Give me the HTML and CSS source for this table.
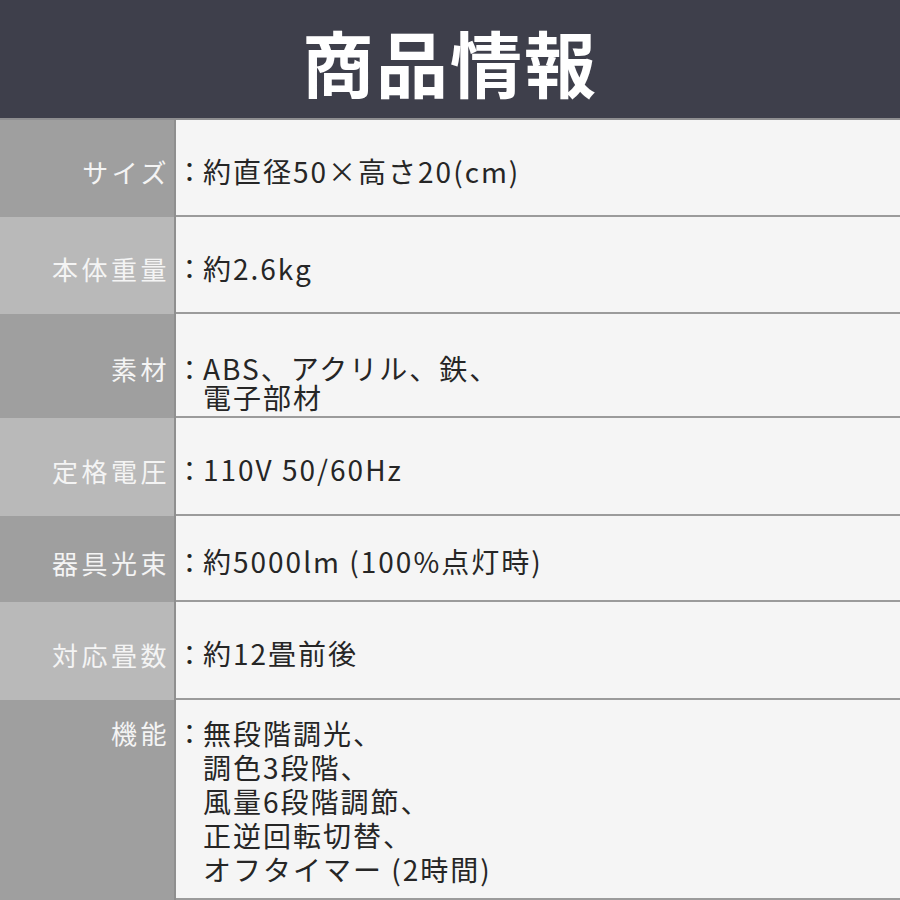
FILE: index.html
```html
<!DOCTYPE html>
<html lang="ja">
<head>
<meta charset="utf-8">
<link rel="stylesheet" href="styles.css">
</head>
<body>
<div class="page">
  <header class="head"><h1 class="title">商品情報</h1></header>
  <div class="table">
    <div class="row r1 dark">
      <div class="label">サイズ</div>
      <div class="value"><span class="colon">：</span><div class="text">約直径50×高さ20(cm)</div></div>
    </div>
    <div class="row r2 light">
      <div class="label">本体重量</div>
      <div class="value"><span class="colon">：</span><div class="text">約2.6kg</div></div>
    </div>
    <div class="row r3 dark top">
      <div class="label">素材</div>
      <div class="value"><span class="colon">：</span><div class="text tight">ABS、アクリル、鉄、<br>電子部材</div></div>
    </div>
    <div class="row r4 light">
      <div class="label">定格電圧</div>
      <div class="value"><span class="colon">：</span><div class="text">110V 50/60Hz</div></div>
    </div>
    <div class="row r5 dark">
      <div class="label">器具光束</div>
      <div class="value"><span class="colon">：</span><div class="text">約5000lm (100%点灯時)</div></div>
    </div>
    <div class="row r6 light">
      <div class="label">対応畳数</div>
      <div class="value"><span class="colon">：</span><div class="text">約12畳前後</div></div>
    </div>
    <div class="row r7 dark top">
      <div class="label">機能</div>
      <div class="value"><span class="colon">：</span><div class="text loose">無段階調光、<br>調色3段階、<br>風量6段階調節、<br>正逆回転切替、<br>オフタイマー (2時間)</div></div>
    </div>
  </div>
</div>
</body>
</html>
```
FILE: styles.css
```css
* { box-sizing: border-box; }
html, body { margin: 0; padding: 0; }
body {
  width: 900px;
  height: 900px;
  overflow: hidden;
  background: #f5f5f5;
  font-family: "Noto Sans CJK JP", "Noto Sans", sans-serif;
}
.head {
  height: 120px;
  background: #3e3f4b;
  border-bottom: 2px solid #8e8e90;
  display: flex;
  align-items: center;
  justify-content: center;
}
.title {
  margin: 0;
  padding-top: 4px;
  color: #ffffff;
  font-size: 72px;
  font-weight: 700;
  letter-spacing: 2px;
  line-height: 1;
}
.table { display: flex; flex-direction: column; }
.row { display: flex; }
.r1 { height: 97px; }
.r2 { height: 97px; }
.r3 { height: 104px; }
.r4 { height: 98px; }
.r5 { height: 86px; }
.r6 { height: 98px; }
.r7 { height: 200px; }
.label {
  width: 176px;
  flex: none;
  border-right: 2px solid #8f8f8f;
  color: #f4f4f4;
  font-size: 26px;
  letter-spacing: 3.5px;
  padding-right: 4px;
  display: flex;
  align-items: center;
  justify-content: flex-end;
  padding-top: 6px;
}
.dark .label { background: #9f9f9f; }
.light .label { background: #b9b9b9; }
.value {
  flex: 1;
  display: flex;
  align-items: center;
  padding-top: 6px;
  border-bottom: 2px solid #9b9b9b;
  color: #262626;
  font-size: 28px;
  letter-spacing: 2px;
}
.colon {
  width: 27px;
  flex: none;
  letter-spacing: 0;
  font-size: 27px;
}
.text { line-height: 32px; }
.top .label, .top .value { align-items: flex-start; }
.r3 .label, .r3 .value { padding-top: 40px; }
.r3 .label, .r3 .colon, .text.tight { line-height: 29px; }
.r7 .label, .r7 .value { padding-top: 16px; }
.r7 .label, .r7 .colon, .text.loose { line-height: 34px; }
```
